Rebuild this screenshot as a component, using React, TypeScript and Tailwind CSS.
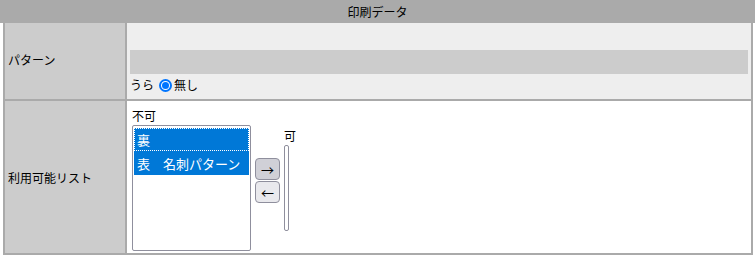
import React from "react";

// font stack used everywhere on the page
const jp = "font-['Noto_Sans_CJK_JP','Noto_Sans',sans-serif]";

export default function App() {
  return (
    <div className={`w-[755px] h-[257px] bg-white text-[12px] leading-none text-black ${jp}`}>
      {/* header */}
      <div className="h-[23px] bg-[#aaaaaa] flex items-center justify-center">印刷データ</div>

      <div className="ml-[3px] w-[750px] border-x-2 border-b-2 border-[#aaaaaa]">
        {/* pattern row */}
        <div className="flex h-[78px] border-b-2 border-[#aaaaaa]">
          <div className="w-[120px] bg-[#cccccc] flex items-center pl-[3px] pb-[2px]">パターン</div>
          <div className="w-[2px] bg-[#aaaaaa]" />
          <div className="flex-1 bg-[#eeeeee] pl-[3px] pr-[3px] pt-[27px]">
            <div className="h-[24px] bg-[#cccccc]" />
            <div className="flex items-center h-[20px] mt-[1px]">
              <span>うら</span>
              <span className="ml-[5px] w-[13px] h-[13px] rounded-full border-2 border-[#0075ff] flex items-center justify-center bg-white">
                <span className="w-[7px] h-[7px] rounded-full bg-[#0075ff]" />
              </span>
              <span className="ml-[2px]">無し</span>
            </div>
          </div>
        </div>

        {/* available list row */}
        <div className="flex h-[152px]">
          <div className="w-[120px] bg-[#cccccc] flex items-center pl-[3px] pt-[2px]">利用可能リスト</div>
          <div className="w-[2px] bg-[#aaaaaa]" />
          <div className="flex-1 bg-white pl-[5px] pt-[8px] flex items-start">
            <div className="flex flex-col">
              <div className="h-[13px] flex items-center">不可</div>
              <div className="mt-[3px] w-[119px] h-[126px] border border-[#8f8f9d] rounded-[2px] p-[1px] pt-[2px] text-[13px]">
                <div className="h-[23px] bg-[#0078d7] text-white flex items-center px-[3px] outline-1 outline-dotted outline-white -outline-offset-1">裏</div>
                <div className="h-[24px] bg-[#0078d7] text-white flex items-center px-[3px] whitespace-pre">表　名刺パターン</div>
              </div>
            </div>
            <div className="ml-[4px] mt-[49px] flex flex-col">
              <button className="w-[25px] h-[22px] bg-[#d0d0d7] border border-[#8f8f9d] rounded-[4px] flex items-center justify-center text-[13px]">→</button>
              <button className="w-[25px] h-[22px] mt-px bg-[#e9e9ed] border border-[#8f8f9d] rounded-[4px] flex items-center justify-center text-[13px]">←</button>
            </div>
            <div className="ml-[4px] mt-[20px] flex flex-col">
              <div className="h-[13px] flex items-center">可</div>
              <div className="mt-[3px] w-[5px] h-[86px] border border-[#8f8f9d] rounded-[2px]" />
            </div>
          </div>
        </div>
      </div>
    </div>
  );
}
